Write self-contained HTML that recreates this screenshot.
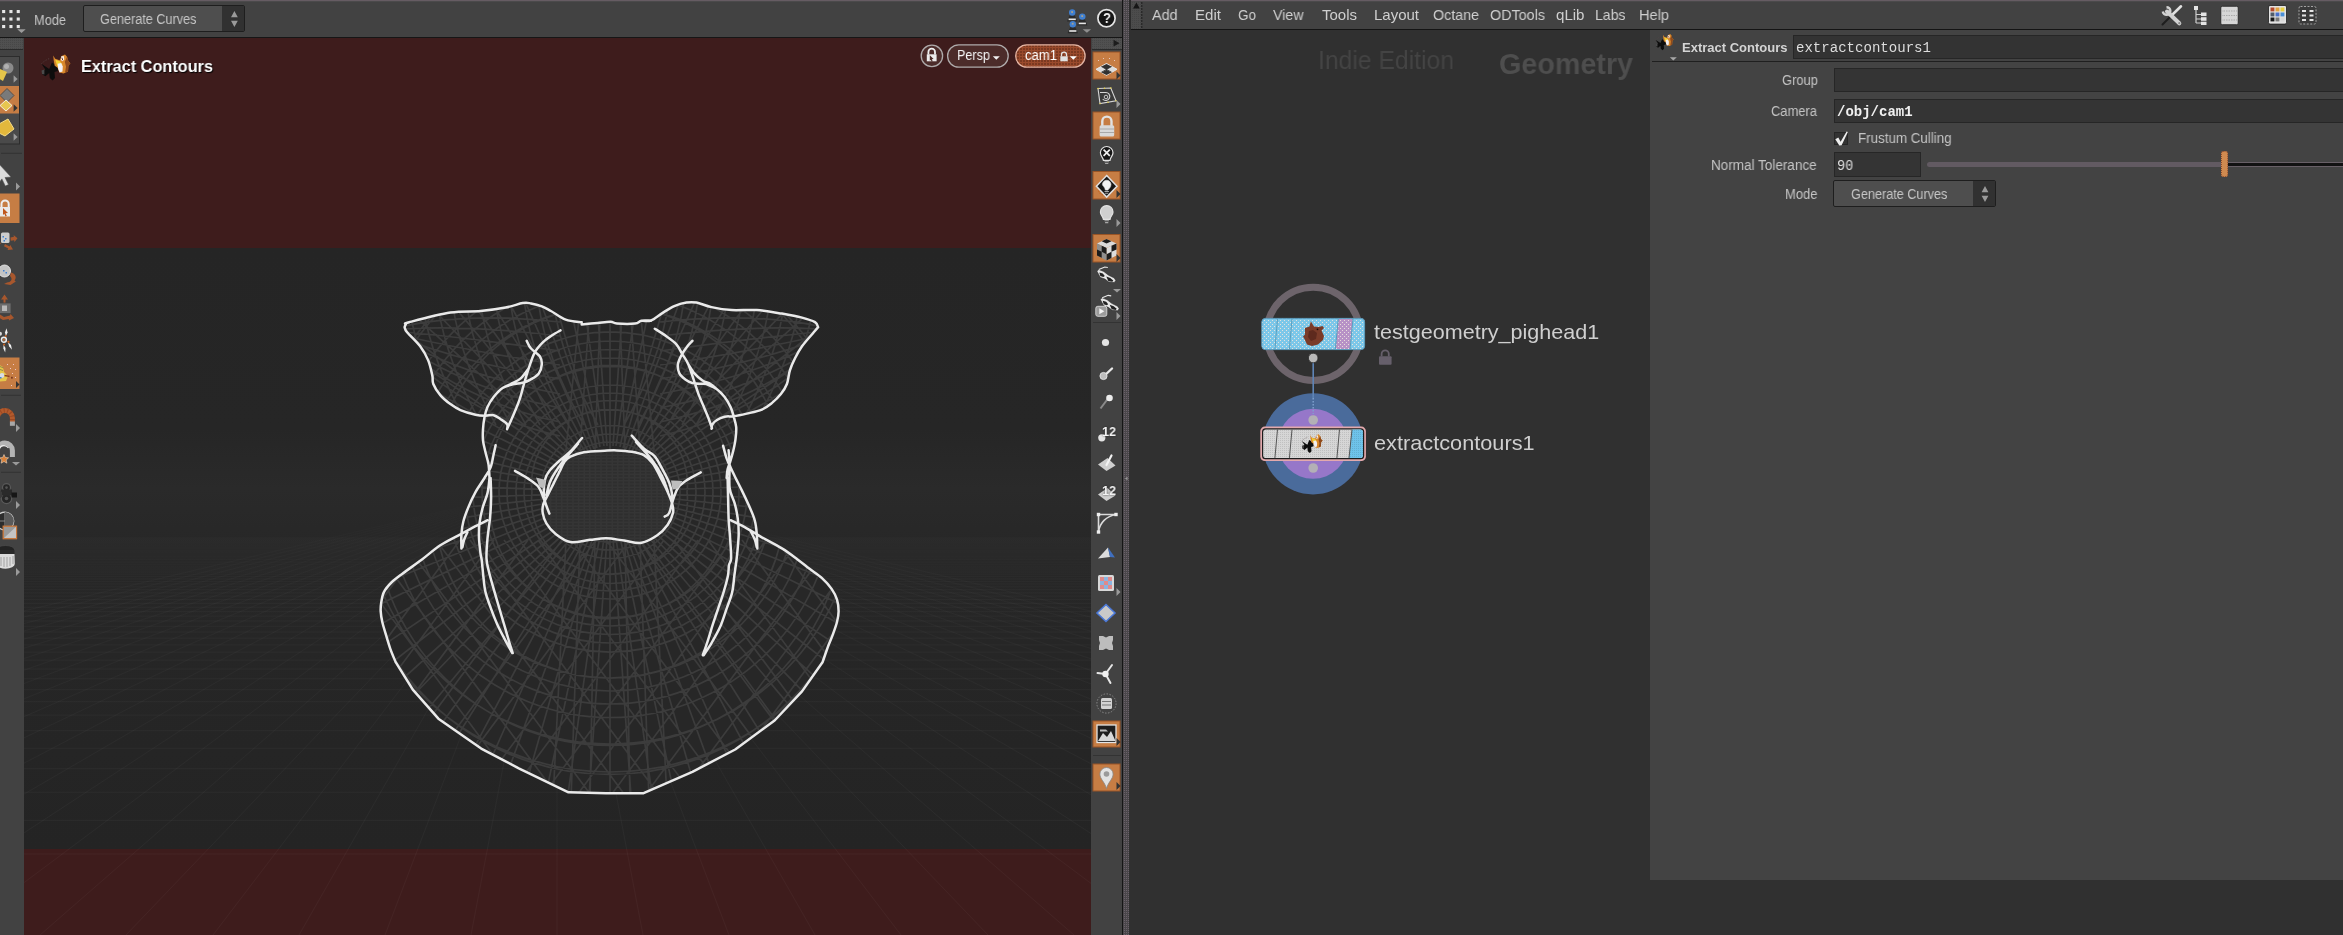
<!DOCTYPE html>
<html lang="en"><head><meta charset="utf-8"><title>Extract Contours</title><style>
html,body{margin:0;padding:0;background:#303030;}
body{width:2343px;height:935px;position:relative;overflow:hidden;font-family:"Liberation Sans",sans-serif;}
.b{position:absolute;box-sizing:border-box;}
.t{position:absolute;white-space:pre;transform-origin:0 50%;margin:0;padding:0;will-change:transform;}
svg{position:absolute;overflow:visible;}
</style></head><body>
<div class="b" style="left:0px;top:0px;width:2343px;height:2px;background:#4b4a4b;"></div>
<div class="b" style="left:0px;top:0px;width:2343px;height:1px;background:#665c63;"></div>
<div class="b" style="left:0px;top:2px;width:1122px;height:35px;background:#424242;"></div>
<div class="b" style="left:0px;top:37px;width:1122px;height:1px;background:#161616;"></div>
<div class="b" style="left:0px;top:38px;width:24px;height:897px;background:#424242;"></div>
<div class="b viewport" style="left:24px;top:38px;width:1067px;height:897px;background:#3e1c1c;"></div>
<div class="b" style="left:24px;top:248px;width:1067px;height:601px;background:linear-gradient(#252525,#262626 30%,#2a2a2a 40%,#272727 50%,#242424);"></div>
<svg width="2343" height="935" viewBox="0 0 2343 935" style="left:0;top:0"><defs><clipPath id="vp"><rect x="24" y="500" width="1067" height="435"/></clipPath><linearGradient id="gf" x1="0" y1="484" x2="0" y2="935" gradientUnits="userSpaceOnUse"><stop offset="0" stop-color="#fff" stop-opacity="0"/><stop offset=".25" stop-color="#fff" stop-opacity=".025"/><stop offset="1" stop-color="#fff" stop-opacity=".035"/></linearGradient></defs><path clip-path="url(#vp)" d="M24 854H1091M24 820.4H1091M24 792.3H1091M24 768.6H1091M24 748.3H1091M24 730.7H1091M24 715.2H1091M24 701.6H1091M24 689.6H1091M24 678.7H1091M24 669H1091M24 660.2H1091M24 652.2H1091M24 644.9H1091M24 638.2H1091M24 632H1091M24 626.3H1091M24 621H1091M24 616.1H1091M24 611.6H1091M24 607.3H1091M24 603.4H1091M24 599.6H1091M24 596.1H1091M24 592.8H1091M24 589.7H1091M24 586.8H1091M24 584H1091M24 581.4H1091M24 578.9H1091M24 576.5H1091M24 574.2H1091M24 572.1H1091M24 570H1091M24 568.1H1091M24 566.2H1091M24 564.4H1091M24 562.7H1091M24 561.1H1091M24 559.5H1091M24 558H1091M24 556.5H1091M24 555.2H1091M24 553.8H1091M24 552.5H1091M24 551.3H1091M24 550.1H1091M24 548.9H1091M24 547.8H1091M24 546.7H1091M24 545.7H1091M24 544.7H1091M24 543.7H1091M24 542.7H1091M24 541.8H1091M24 540.9H1091M24 540.1H1091M24 539.2H1091M24 538.4H1091M24 537.6H1091M557 484L-1337 935M557 484L-1251 935M557 484L-1165 935M557 484L-1079 935M557 484L-993 935M557 484L-907 935M557 484L-821 935M557 484L-734 935M557 484L-648 935M557 484L-562 935M557 484L-476 935M557 484L-390 935M557 484L-304 935M557 484L-218 935M557 484L-132 935M557 484L-46 935M557 484L40 935M557 484L126 935M557 484L213 935M557 484L299 935M557 484L385 935M557 484L471 935M557 484L557 935M557 484L643 935M557 484L729 935M557 484L815 935M557 484L901 935M557 484L988 935M557 484L1074 935M557 484L1160 935M557 484L1246 935M557 484L1332 935M557 484L1418 935M557 484L1504 935M557 484L1590 935M557 484L1676 935M557 484L1762 935M557 484L1848 935M557 484L1935 935M557 484L2021 935M557 484L2107 935M557 484L2193 935M557 484L2279 935M557 484L2365 935M557 484L2451 935" fill="none" stroke="url(#gf)" stroke-width="1"/></svg>
<div class="b" style="left:1091px;top:38px;width:31px;height:897px;background:#424242;"></div>
<div class="b" style="left:1122px;top:0px;width:1.3px;height:935px;background:#151515;"></div>
<div class="b" style="left:1123.3px;top:0px;width:5.7px;height:935px;background:#4a474a;"></div>
<div class="b" style="left:1131px;top:2px;width:1212px;height:27px;background:#424242;"></div>
<div class="b" style="left:1131px;top:29px;width:1212px;height:1px;background:#141414;"></div>
<div class="b" style="left:1129px;top:0px;width:2px;height:30px;background:#2c2c2c;"></div>
<div class="b" style="left:1129px;top:30px;width:1214px;height:905px;background:#303030;"></div>
<div class="b" style="left:1650px;top:30px;width:693px;height:850px;background:#434343;"></div>
<span class="t" style="left:34px;top:11.83px;font:14px/normal 'Liberation Sans',sans-serif;color:#c6c6c6;transform:scaleX(0.9137);">Mode</span>
<div class="b" style="left:83px;top:5px;width:162px;height:27px;background:#4e4e4e;border:1px solid #1e1e1e;border-radius:2px;"></div>
<div class="b" style="left:222px;top:6px;width:22px;height:25px;background:#313131;"></div>
<span class="t" style="left:99.5px;top:11.33px;font:14px/normal 'Liberation Sans',sans-serif;color:#c6c6c6;transform:scaleX(0.9052);">Generate Curves</span>
<span class="t" style="left:81px;top:56.62px;font:bold 17px/normal 'Liberation Sans',sans-serif;color:#fff;transform:scaleX(0.9571);text-shadow:1px 1px 1px #000;">Extract Contours</span>
<span class="t" style="left:1152px;top:6.42px;font:15px/normal 'Liberation Sans',sans-serif;color:#cfcfcf;transform:scaleX(0.9629);">Add</span>
<span class="t" style="left:1195px;top:6.42px;font:15px/normal 'Liberation Sans',sans-serif;color:#cfcfcf;transform:scaleX(1.0059);">Edit</span>
<span class="t" style="left:1238px;top:6.42px;font:15px/normal 'Liberation Sans',sans-serif;color:#cfcfcf;transform:scaleX(0.8996);">Go</span>
<span class="t" style="left:1273px;top:6.42px;font:15px/normal 'Liberation Sans',sans-serif;color:#cfcfcf;transform:scaleX(0.946);">View</span>
<span class="t" style="left:1322px;top:6.42px;font:15px/normal 'Liberation Sans',sans-serif;color:#cfcfcf;transform:scaleX(0.9881);">Tools</span>
<span class="t" style="left:1374px;top:6.42px;font:15px/normal 'Liberation Sans',sans-serif;color:#cfcfcf;transform:scaleX(0.9992);">Layout</span>
<span class="t" style="left:1433px;top:6.42px;font:15px/normal 'Liberation Sans',sans-serif;color:#cfcfcf;transform:scaleX(0.9512);">Octane</span>
<span class="t" style="left:1490px;top:6.42px;font:15px/normal 'Liberation Sans',sans-serif;color:#cfcfcf;transform:scaleX(0.9562);">ODTools</span>
<span class="t" style="left:1556px;top:6.42px;font:15px/normal 'Liberation Sans',sans-serif;color:#cfcfcf;transform:scaleX(1.005);">qLib</span>
<span class="t" style="left:1595px;top:6.42px;font:15px/normal 'Liberation Sans',sans-serif;color:#cfcfcf;transform:scaleX(0.9377);">Labs</span>
<span class="t" style="left:1639px;top:6.42px;font:15px/normal 'Liberation Sans',sans-serif;color:#cfcfcf;transform:scaleX(0.9725);">Help</span>
<span class="t" style="left:1317.6px;top:46.17px;font:25px/normal 'Liberation Sans',sans-serif;color:#444;transform:scaleX(0.9884);">Indie Edition</span>
<span class="t" style="left:1498.5px;top:48.16px;font:bold 29px/normal 'Liberation Sans',sans-serif;color:#4e4e4e;transform:scaleX(0.9898);">Geometry</span>
<span class="t" style="left:1682.4px;top:40.03px;font:bold 13px/normal 'Liberation Sans',sans-serif;color:#d4d4d4;transform:scaleX(0.9975);">Extract Contours</span>
<div class="b" style="left:1793px;top:35px;width:560px;height:24px;background:#333;border:1px solid #262626;"></div>
<span class="t" style="left:1796px;top:39.94px;font:14px/normal 'Liberation Mono',monospace;color:#ddd;transform:scaleX(1.0043);">extractcontours1</span>
<div class="b" style="left:1652px;top:61px;width:700px;height:1px;background:#1f1f1f;"></div>
<span class="t" style="left:1781.5px;top:71.93px;font:14px/normal 'Liberation Sans',sans-serif;color:#c4c4c4;transform:scaleX(0.9252);">Group</span>
<div class="b" style="left:1834px;top:68px;width:520px;height:24px;background:#343434;border:1px solid #262626;"></div>
<span class="t" style="left:1771px;top:103.33px;font:14px/normal 'Liberation Sans',sans-serif;color:#c4c4c4;transform:scaleX(0.9238);">Camera</span>
<div class="b" style="left:1834px;top:99px;width:520px;height:24px;background:#343434;border:1px solid #262626;"></div>
<span class="t" style="left:1837.4px;top:103.64px;font:bold 14px/normal 'Liberation Mono',monospace;color:#f0f0f0;transform:scaleX(0.9998);">/obj/cam1</span>
<div class="b" style="left:1834px;top:132px;width:14px;height:13px;background:#333;border:1px solid #262626;"></div>
<span class="t" style="left:1858.4px;top:129.83px;font:14px/normal 'Liberation Sans',sans-serif;color:#c4c4c4;transform:scaleX(0.9548);">Frustum Culling</span>
<span class="t" style="left:1711.4px;top:156.83px;font:14px/normal 'Liberation Sans',sans-serif;color:#c4c4c4;transform:scaleX(0.9648);">Normal Tolerance</span>
<div class="b" style="left:1834px;top:152px;width:87px;height:25px;background:#343434;border:1px solid #262626;"></div>
<span class="t" style="left:1837.4px;top:158.34px;font:14px/normal 'Liberation Mono',monospace;color:#ddd;transform:scaleX(0.9641);">90</span>
<div class="b" style="left:1927px;top:162px;width:297px;height:5.4px;background:#625a62;border-radius:3px 0 0 3px;"></div>
<div class="b" style="left:2224px;top:162px;width:130px;height:5.4px;background:#686067;"></div>
<div class="b" style="left:2224px;top:163.2px;width:130px;height:3px;background:#121212;"></div>
<div class="b" style="left:2220.5px;top:151px;width:7.8px;height:26.4px;background:#cf8a50;border-radius:2.5px;border:1px dotted #8a4a2c;"></div>
<span class="t" style="left:1784.6px;top:185.93px;font:14px/normal 'Liberation Sans',sans-serif;color:#c4c4c4;transform:scaleX(0.9252);">Mode</span>
<div class="b" style="left:1833px;top:180px;width:163px;height:27px;background:#4e4e4e;border:1px solid #1e1e1e;border-radius:2px;"></div>
<div class="b" style="left:1973px;top:181px;width:22px;height:25px;background:#313131;"></div>
<span class="t" style="left:1850.6px;top:185.83px;font:14px/normal 'Liberation Sans',sans-serif;color:#c6c6c6;transform:scaleX(0.9043);">Generate Curves</span>
<svg class="pig" width="2343" height="935" viewBox="0 0 2343 935" style="left:0;top:0"><defs><clipPath id="sil"><path d="M404.6 327.2L406 324L409.1 322.2L450.4 312.6L480.5 311.1L505.6 307.6L522.7 303.1L531 303.4L541.9 306.3L550.9 311L565.7 319.7L581.7 322.3L597.7 322.9L610.6 321.7L617 323.6L635 323.6L641.4 320.7L651 320.5L662.3 313.1L674.3 306.1L686.4 302.6L696.5 302.6L711.5 307.1L731.6 310.1L756.8 310.1L781.9 313.6L802 317.6L815 322.2L818.1 327.2L813 333.2L802 346.3L795 358.3L789.9 370.4L786.9 384L780.9 394.1L771.8 403.1L761.8 409.6L746.7 413.6L733.6 416.2L733.6 416.2L736.2 427.2L735.6 438.3L733.6 449.3L730.6 460.4L727.6 469.4L726.6 478L735.6 478L741.7 490.1L748.7 505.1L754.7 520.2L756.8 534.3L761.8 537.3L781.9 548.4L797.2 559.2L809.2 568.6L822 578.2L831.6 588.9L837 599.6L838.6 611.3L837 622L832.7 634.9L828.4 645.5L822.5 662.3L802 691.4L774.6 720.5L735.2 749.5L692.4 771.8L643.6 793.2L606.1 793.3L568.5 792.3L518.8 768.3L481.2 748.6L438.4 718.7L412.8 689.6L395.7 662.2L390.3 648.8L386 634.9L382.3 622L380.7 611.3L381.2 602.8L383.9 592.1L391.4 582.5L402.1 573.9L421.3 560L440.3 545.3L460.4 534.3L461.4 534.3L463.4 521.2L468.4 507.1L475.5 492.1L484.5 478L488.5 464.4L485.5 452.3L483 440.3L483 429.2L485.5 415.7L475.5 414.7L460.4 410.1L450.4 404.1L440.3 395.1L433.3 384L432.3 375.4L428.2 360.4L420.2 346.3L407.1 332.2L404.6 327.2Z"/></clipPath><clipPath id="snc"><path d="M604.8 450.7C599.3 451 589.6 451.2 583.9 452.2C578.2 453.2 573.6 455.1 570.4 456.7C567.1 458.3 566.1 459.5 564.4 461.9C562.6 464.3 561.6 467.4 559.9 470.9C558.1 474.4 555.9 478.9 553.9 482.9C551.9 486.9 549.6 491.4 547.9 494.9C546.1 498.4 544.3 500.9 543.4 503.9C542.5 506.9 542.2 509.7 542.7 512.9C543.2 516.1 544.3 519.8 546.4 523.3C548.5 526.8 551.4 530.7 555.4 533.8C559.4 536.9 564.6 541.1 570.4 542.1C576.1 543.1 583.9 540.4 589.9 539.8C595.9 539.2 600.6 538.2 606.3 538.3C612 538.4 618.4 539.9 624.3 540.6C630.2 541.4 636 543.7 641.5 542.8C647 541.9 652.9 538.3 657.3 535.3C661.7 532.3 665.1 528.5 667.7 524.8C670.3 521.1 672.2 516.4 673 512.9C673.8 509.4 673.1 507.4 672.2 503.9C671.3 500.4 669.7 496.4 667.7 491.9C665.7 487.4 662.7 481.6 660.2 476.9C657.7 472.1 655.5 467 652.8 463.4C650.1 459.8 647.3 457.1 643.8 455.2C640.3 453.3 636.3 452.6 631.8 451.8C627.3 451 621.3 450.6 616.8 450.4C612.3 450.2 610.3 450.4 604.8 450.7Z"/></clipPath></defs><path d="M404.6 327.2L406 324L409.1 322.2L450.4 312.6L480.5 311.1L505.6 307.6L522.7 303.1L531 303.4L541.9 306.3L550.9 311L565.7 319.7L581.7 322.3L597.7 322.9L610.6 321.7L617 323.6L635 323.6L641.4 320.7L651 320.5L662.3 313.1L674.3 306.1L686.4 302.6L696.5 302.6L711.5 307.1L731.6 310.1L756.8 310.1L781.9 313.6L802 317.6L815 322.2L818.1 327.2L813 333.2L802 346.3L795 358.3L789.9 370.4L786.9 384L780.9 394.1L771.8 403.1L761.8 409.6L746.7 413.6L733.6 416.2L733.6 416.2L736.2 427.2L735.6 438.3L733.6 449.3L730.6 460.4L727.6 469.4L726.6 478L735.6 478L741.7 490.1L748.7 505.1L754.7 520.2L756.8 534.3L761.8 537.3L781.9 548.4L797.2 559.2L809.2 568.6L822 578.2L831.6 588.9L837 599.6L838.6 611.3L837 622L832.7 634.9L828.4 645.5L822.5 662.3L802 691.4L774.6 720.5L735.2 749.5L692.4 771.8L643.6 793.2L606.1 793.3L568.5 792.3L518.8 768.3L481.2 748.6L438.4 718.7L412.8 689.6L395.7 662.2L390.3 648.8L386 634.9L382.3 622L380.7 611.3L381.2 602.8L383.9 592.1L391.4 582.5L402.1 573.9L421.3 560L440.3 545.3L460.4 534.3L461.4 534.3L463.4 521.2L468.4 507.1L475.5 492.1L484.5 478L488.5 464.4L485.5 452.3L483 440.3L483 429.2L485.5 415.7L475.5 414.7L460.4 410.1L450.4 404.1L440.3 395.1L433.3 384L432.3 375.4L428.2 360.4L420.2 346.3L407.1 332.2L404.6 327.2Z" fill="#272727"/><g clip-path="url(#sil)" fill="none" stroke="#3c3c3c" stroke-width="1.7"><path d="M557 492a53 50 0 1 0 106 0a53 50 0 1 0 -106 0M549 492a61 58 0 1 0 122 0a61 58 0 1 0 -122 0M541 492a69 66 0 1 0 139 0a69 66 0 1 0 -139 0M532 492a78 74 0 1 0 155 0a78 74 0 1 0 -155 0M524 492a86 82 0 1 0 172 0a86 82 0 1 0 -172 0M516 492a94 91 0 1 0 189 0a94 91 0 1 0 -189 0M507 492a103 99 0 1 0 206 0a103 99 0 1 0 -206 0M499 492a111 107 0 1 0 222 0a111 107 0 1 0 -222 0M490 492a120 116 0 1 0 239 0a120 116 0 1 0 -239 0M482 492a128 125 0 1 0 257 0a128 125 0 1 0 -257 0M473 492a137 134 0 1 0 274 0a137 134 0 1 0 -274 0M465 492a145 142 0 1 0 291 0a145 142 0 1 0 -291 0M456 492a154 151 0 1 0 308 0a154 151 0 1 0 -308 0M447 492a163 160 0 1 0 326 0a163 160 0 1 0 -326 0M435 492a175 173 0 1 0 349 0a175 173 0 1 0 -349 0M423 492a187 186 0 1 0 374 0a187 186 0 1 0 -374 0M411 492a199 199 0 1 0 398 0a199 199 0 1 0 -398 0M399 492a211 212 0 1 0 422 0a211 212 0 1 0 -422 0M387 492a223 225 0 1 0 447 0a223 225 0 1 0 -447 0M374 492a236 238 0 1 0 471 0a236 238 0 1 0 -471 0M362 492a248 252 0 1 0 496 0a248 252 0 1 0 -496 0M349 492a261 266 0 1 0 521 0a261 266 0 1 0 -521 0M337 492a273 280 0 1 0 546 0a273 280 0 1 0 -546 0M324 492a286 294 0 1 0 571 0a286 294 0 1 0 -571 0M312 492a298 308 0 1 0 597 0a298 308 0 1 0 -597 0M299 492a311 323 0 1 0 622 0a311 323 0 1 0 -622 0M286 492a324 337 0 1 0 648 0a324 337 0 1 0 -648 0M273 492a337 352 0 1 0 673 0a337 352 0 1 0 -673 0M260 492a350 367 0 1 0 699 0a350 367 0 1 0 -699 0M247 492a363 382 0 1 0 725 0a363 382 0 1 0 -725 0M234 492a376 397 0 1 0 751 0a376 397 0 1 0 -751 0M221 492a389 413 0 1 0 778 0a389 413 0 1 0 -778 0M656 494L1030 507M656 497L1028 536M655 500L1024 565M655 503L1018 594M654 506L1009 622M653 509L999 649M651 512L987 676M650 515L974 702M648 518L958 727M646 520L941 751M644 523L922 773M642 525L902 794M640 527L880 814M637 529L857 832M634 531L833 848M632 533L807 863M629 534L781 876M626 535L754 887M623 536L726 896M620 537L697 903M616 538L668 908M613 538L639 911M610 538L610 912M607 538L581 911M604 538L552 908M600 537L523 903M597 536L494 896M594 535L466 887M591 534L439 876M588 533L413 863M586 531L387 848M583 529L363 832M580 527L340 814M578 525L318 794M576 523L298 773M574 520L279 751M572 518L262 727M570 515L246 702M569 512L233 676M567 509L221 649M566 506L211 622M565 503L202 594M565 500L196 565M564 497L192 536M564 494L190 507M564 490L190 477M564 487L192 448M565 484L196 419M565 481L202 390M566 478L211 362M567 475L221 335M569 472L233 308M570 469L246 282M572 466L262 257M574 464L279 233M576 461L298 211M578 459L318 190M580 457L340 170M583 455L363 152M586 453L387 136M588 451L413 121M591 450L439 108M594 449L466 97M597 448L494 88M600 447L523 81M604 446L552 76M607 446L581 73M610 446L610 72M613 446L639 73M616 446L668 76M620 447L697 81M623 448L726 88M626 449L754 97M629 450L781 108M632 451L807 121M634 453L833 136M637 455L857 152M640 457L880 170M642 459L902 190M644 461L922 211M646 464L941 233M648 466L958 257M650 469L974 282M651 472L987 308M653 475L999 335M654 478L1009 362M655 481L1018 390M655 484L1024 419M656 487L1028 448M656 490L1030 477M579 318L566 450M566 540L553 800M589 318L580 450M580 540L571 800M600 318L595 450M595 540L590 800M610 318L610 450M610 540L610 800M620 318L625 450M625 540L630 800M631 318L640 450M640 540L649 800M641 318L654 450M654 540L667 800M96 540L296 810M426 540L226 810M130 540L330 810M460 540L260 810M164 540L364 810M494 540L294 810M198 540L398 810M528 540L328 810M232 540L432 810M562 540L362 810M266 540L466 810M596 540L396 810M300 540L500 810M630 540L430 810M334 540L534 810M664 540L464 810M368 540L568 810M698 540L498 810M402 540L602 810M732 540L532 810M436 540L636 810M766 540L566 810M470 540L670 810M800 540L600 810M504 540L704 810M834 540L634 810M538 540L738 810M868 540L668 810M572 540L772 810M902 540L702 810M606 540L806 810M936 540L736 810M640 540L840 810M970 540L770 810M674 540L874 810M1004 540L804 810M708 540L908 810M1038 540L838 810M742 540L942 810M1072 540L872 810M776 540L976 810M1106 540L906 810M810 540L1010 810M1140 540L940 810M844 540L1044 810M1174 540L974 810M878 540L1078 810M1208 540L1008 810M912 540L1112 810M1242 540L1042 810M946 540L1146 810M1276 540L1076 810M980 540L1180 810M1310 540L1110 810M1014 540L1214 810M1344 540L1144 810M404 326Q470 312 560 322M818 326Q752 312 660 322M404 329Q470 325 560 336M818 329Q752 325 660 336M404 332Q470 338 560 351M818 332Q752 338 660 351M404 336Q470 351 560 365M818 336Q752 351 660 365M404 339Q470 364 560 379M818 339Q752 364 660 379M404 342Q470 377 560 394M818 342Q752 377 660 394M404 346Q470 390 560 408M818 346Q752 390 660 408M404 349Q470 403 560 422M818 349Q752 403 660 422M404 352Q470 416 560 436M818 352Q752 416 660 436M408 300Q416 360 453 425M814 300Q806 360 769 425M422 300Q430 360 468 425M800 300Q792 360 754 425M437 300Q445 360 482 425M785 300Q777 360 740 425M452 300Q460 360 496 425M770 300Q762 360 726 425M466 300Q474 360 511 425M756 300Q748 360 711 425M480 300Q488 360 526 425M742 300Q734 360 696 425M495 300Q503 360 540 425M727 300Q719 360 682 425M510 300Q518 360 554 425M712 300Q704 360 668 425M524 300Q532 360 569 425M698 300Q690 360 653 425M538 300Q546 360 584 425M684 300Q676 360 638 425M553 300Q561 360 598 425M669 300Q661 360 624 425"/></g><g clip-path="url(#snc)"><path d="M604.8 450.7C599.3 451 589.6 451.2 583.9 452.2C578.2 453.2 573.6 455.1 570.4 456.7C567.1 458.3 566.1 459.5 564.4 461.9C562.6 464.3 561.6 467.4 559.9 470.9C558.1 474.4 555.9 478.9 553.9 482.9C551.9 486.9 549.6 491.4 547.9 494.9C546.1 498.4 544.3 500.9 543.4 503.9C542.5 506.9 542.2 509.7 542.7 512.9C543.2 516.1 544.3 519.8 546.4 523.3C548.5 526.8 551.4 530.7 555.4 533.8C559.4 536.9 564.6 541.1 570.4 542.1C576.1 543.1 583.9 540.4 589.9 539.8C595.9 539.2 600.6 538.2 606.3 538.3C612 538.4 618.4 539.9 624.3 540.6C630.2 541.4 636 543.7 641.5 542.8C647 541.9 652.9 538.3 657.3 535.3C661.7 532.3 665.1 528.5 667.7 524.8C670.3 521.1 672.2 516.4 673 512.9C673.8 509.4 673.1 507.4 672.2 503.9C671.3 500.4 669.7 496.4 667.7 491.9C665.7 487.4 662.7 481.6 660.2 476.9C657.7 472.1 655.5 467 652.8 463.4C650.1 459.8 647.3 457.1 643.8 455.2C640.3 453.3 636.3 452.6 631.8 451.8C627.3 451 621.3 450.6 616.8 450.4C612.3 450.2 610.3 450.4 604.8 450.7Z" fill="#2e2e2e"/><path d="M540 452H680M540 455.2H680M540 458.4H680M540 461.6H680M540 464.8H680M540 468H680M540 471.2H680M540 474.4H680M540 477.6H680M540 480.8H680M540 484H680M540 487.2H680M540 490.4H680M540 493.6H680M540 496.8H680M540 500H680M540 503.2H680M540 506.4H680M540 509.6H680M540 512.8H680M540 516H680M540 519.2H680M540 522.4H680M540 525.6H680M540 528.8H680M540 532H680M540 535.2H680M540 538.4H680M540 541.6H680M540 544.8H680M545 445V548M550.6 445V548M556.2 445V548M561.8 445V548M567.4 445V548M573 445V548M578.6 445V548M584.2 445V548M589.8 445V548M595.4 445V548M601 445V548M606.6 445V548M612.2 445V548M617.8 445V548M623.4 445V548M629 445V548M634.6 445V548M640.2 445V548M645.8 445V548M651.4 445V548M657 445V548M662.6 445V548M668.2 445V548M673.8 445V548" fill="none" stroke="#353535" stroke-width="1.6"/></g><path d="M404.6 327.2C404.8 326.7 405.2 324.8 406 324C406.8 323.2 401.7 324.1 409.1 322.2C416.5 320.3 438.5 314.5 450.4 312.6C462.3 310.8 471.3 311.9 480.5 311.1C489.7 310.3 498.6 308.9 505.6 307.6C512.6 306.3 518.5 303.8 522.7 303.1C526.9 302.4 527.8 302.9 531 303.4C534.2 303.9 538.6 305 541.9 306.3C545.2 307.6 546.9 308.8 550.9 311C554.9 313.2 560.6 317.8 565.7 319.7C570.8 321.6 579 321.9 581.7 322.3M581.7 324.6C584.4 324.3 592.9 323.4 597.7 322.9C602.5 322.4 607.4 321.6 610.6 321.7C613.8 321.8 612.9 323.3 617 323.6C621.1 323.9 630.9 324.1 635 323.6C639.1 323.1 638.7 321.2 641.4 320.7C644.1 320.2 649.4 320.7 651 320.7M641.4 320.7C643 320.7 647.5 321.8 651 320.5C654.5 319.2 658.4 315.5 662.3 313.1C666.2 310.7 670.3 307.9 674.3 306.1C678.3 304.4 682.7 303.2 686.4 302.6C690.1 302 692.3 301.9 696.5 302.6C700.7 303.4 705.6 305.9 711.5 307.1C717.4 308.4 724.1 309.6 731.6 310.1C739.1 310.6 748.4 309.5 756.8 310.1C765.2 310.7 774.4 312.4 781.9 313.6C789.4 314.9 796.5 316.2 802 317.6C807.5 319 812.3 320.6 815 322.2C817.7 323.8 817.6 326.4 818.1 327.2M818.1 327.2C817.2 328.2 815.7 330 813 333.2C810.3 336.4 805 342.1 802 346.3C799 350.5 797 354.3 795 358.3C793 362.3 791.2 366.1 789.9 370.4C788.5 374.7 788.4 380.1 786.9 384C785.4 387.9 783.4 390.9 780.9 394.1C778.4 397.3 775 400.5 771.8 403.1C768.6 405.7 766 407.9 761.8 409.6C757.6 411.4 751.4 412.5 746.7 413.6C742 414.7 737.3 415.7 733.6 416.2C729.9 416.7 727.4 416 724.6 416.7C721.8 417.4 718.6 418.9 716.6 420.2C714.6 421.4 713.4 422.8 712.5 424.2C711.6 425.6 711.7 427.9 711.5 428.7M404.6 327.2C405 328 404.5 329 407.1 332.2C409.7 335.4 416.7 341.6 420.2 346.3C423.7 351 426.2 355.5 428.2 360.4C430.2 365.2 431.4 371.5 432.3 375.4C433.2 379.3 432 380.7 433.3 384C434.6 387.3 437.5 391.8 440.3 395.1C443.1 398.5 447 401.6 450.4 404.1C453.8 406.6 456.2 408.3 460.4 410.1C464.6 411.9 471.3 413.8 475.5 414.7C479.7 415.6 482.5 415.6 485.5 415.7C488.5 415.8 491.1 414.6 493.6 415.2C496.1 415.8 498.4 417.7 500.6 419.2C502.9 420.7 506 422.5 507.1 424.2C508.2 425.9 507.1 428.4 507.1 429.2M513.7 384C511.9 384.7 506 385.8 502.6 388C499.2 390.2 496.1 393.9 493.6 397.1C491.1 400.3 489 403.8 487.5 407.1C486 410.5 485.2 413.5 484.5 417.2C483.8 420.9 483.2 425.3 483 429.2C482.8 433.1 482.6 436.4 483 440.3C483.4 444.2 484.6 448.3 485.5 452.3C486.4 456.3 487.8 460.1 488.5 464.4C489.2 468.7 489.3 475.7 489.5 478M706.5 384C708.2 384.8 713.6 386.8 716.6 389C719.6 391.2 722.3 394.1 724.6 397.1C726.9 400.1 729.1 403.9 730.6 407.1C732.1 410.3 732.7 412.9 733.6 416.2C734.5 419.5 735.9 423.5 736.2 427.2C736.5 430.9 736 434.6 735.6 438.3C735.2 442 734.4 445.6 733.6 449.3C732.8 453 731.6 457 730.6 460.4C729.6 463.8 728.3 466.5 727.6 469.4C726.9 472.3 726.8 476.6 726.6 478M560.5 330.4C558.9 331.3 554 334 551 336C548 338 545.5 339.6 542.8 342.3C540.1 345 537.1 348 534.8 352.3C532.4 356.6 530.6 362.9 528.7 368.4C526.9 373.8 525.2 379.9 523.7 385C522.2 390.1 521.4 394.2 519.7 399.1C518 404 515.8 409.3 513.7 414.2C511.6 419.1 508.4 426.2 507.3 428.6M528.7 368.4C527.4 370.1 523.7 375.8 520.7 378.4C517.7 381 513.7 382.4 510.7 384C507.7 385.6 504 387.3 502.6 388M526.7 340.8C527.4 342.1 528.6 345.7 530.8 348.3C533 350.9 538 353.6 539.8 356.3C541.6 359 542 361.5 541.8 364.4C541.6 367.2 540.6 370.9 538.8 373.4C537 375.9 533.3 377.9 530.8 379.4C528.3 380.9 526.6 381.7 523.7 382.5C520.9 383.3 515.4 383.8 513.7 384M654.8 328.7C656.7 329.9 662.7 333.6 666.3 336.2C669.9 338.8 673.7 341.3 676.4 344.3C679.1 347.3 680.4 351 682.4 354.3C684.4 357.6 686.2 359.3 688.4 364.4C690.6 369.5 693.7 380.1 695.4 385C697.1 389.9 697.1 390.6 698.5 394.1C699.9 397.6 701.8 402.1 703.5 406.1C705.2 410.1 707.1 414.5 708.5 418.2C709.9 421.9 711.4 426.5 712 428.2M688.4 364.4C689.4 365.9 692 370.7 694.4 373.4C696.8 376.1 699.8 378.7 702.5 380.5C705.2 382.3 708.1 382.6 710.5 384C712.9 385.4 715.6 388.2 716.6 389M692.4 340.8C691.6 341.7 689.2 343.9 687.4 346.3C685.6 348.7 683 352.3 681.4 355.3C679.8 358.3 678.2 361.4 677.9 364.4C677.6 367.4 678.1 370.9 679.4 373.4C680.6 375.9 683.2 377.8 685.4 379.4C687.6 381 688.9 382.2 692.4 383C695.9 383.8 704.1 383.8 706.5 384M495.6 445.3C495.3 446.8 494.4 450.7 493.6 454.4C492.8 458.1 492.1 463.5 490.6 467.4C489.1 471.3 487 473.9 484.5 478C482 482.1 478.2 487.2 475.5 492.1C472.8 497 470.4 502.2 468.4 507.1C466.4 512 464.6 516.7 463.4 521.2C462.2 525.7 461.7 529.8 461.4 534.3C461.1 538.8 461.4 546 461.4 548.4M489.5 478C489.2 480.5 488.7 488.1 487.5 493.1C486.3 498.1 483.8 503.2 482.5 508.2C481.2 513.2 480.1 518.2 479.5 523.2C478.9 528.2 478.8 533.3 479 538.3C479.2 543.3 480.1 549.8 480.5 553.4C480.9 557 481.2 556.2 481.7 560C482.2 563.8 482.7 570.6 483.3 576C483.9 581.4 484.2 586.8 485.5 592.1C486.8 597.5 488.9 602.8 490.8 608.1C492.8 613.5 494.9 619 497.2 624.2C499.5 629.4 502.2 634.3 504.7 639.1C507.2 643.9 511 650.7 512.2 653M490.6 478C490.7 481.4 491.2 491.4 491.1 498.1C491 504.8 490.6 511.5 490 518.2C489.4 524.9 488.1 531.6 487.5 538.3C486.9 545 486.3 553 486.5 558.4C486.7 563.8 487.6 566 488.7 570.7C489.8 575.4 491.4 581 493 586.7C494.6 592.4 496.5 598.8 498.3 604.9C500.1 611 501.9 617 503.7 623.1C505.5 629.2 507.5 636.3 509 641.3C510.5 646.3 512.1 651 512.7 653M723.1 445.8C723.7 447.9 725.4 454.8 726.6 458.4C727.9 462 729.1 464.1 730.6 467.4C732.1 470.7 733.8 474.2 735.6 478C737.5 481.8 739.5 485.6 741.7 490.1C743.9 494.6 746.5 500.1 748.7 505.1C750.9 510.1 753.4 515.3 754.7 520.2C756.1 525.1 756.4 529.6 756.8 534.3C757.2 539 757.2 546 757.3 548.4M728.6 450.3C728.8 452.6 729.4 458.1 729.6 464.4C729.8 470.7 728.8 481.6 729.6 488C730.4 494.4 733.2 498.1 734.6 503.1C736 508.1 737 513.2 737.7 518.2C738.4 523.2 738.7 528.3 738.7 533.3C738.7 538.3 738.1 543.9 737.7 548.4C737.3 552.9 737.1 555.4 736.5 560C735.9 564.6 735 570.6 734.3 576C733.6 581.4 733.5 586.8 732.2 592.1C731 597.5 728.8 602.4 726.8 608.1C724.8 613.8 722.9 620.6 720.4 626.3C717.9 632 714.7 637.5 711.9 642.3C709.1 647.1 705.1 653.1 703.8 655.2M727.6 478C727.7 481.4 727.9 491.4 728.1 498.1C728.3 504.8 728.3 511.5 728.6 518.2C728.9 524.9 729.7 531.6 730.1 538.3C730.5 545 731.3 553.9 731.1 558.4C730.9 562.9 729.5 562.1 729 565C728.5 567.9 728.8 571.5 727.9 576C727 580.5 725.2 586.8 723.6 592.1C722 597.5 720.1 602.8 718.3 608.1C716.5 613.5 714.7 618.7 712.9 624.2C711.1 629.7 709.3 636.1 707.6 641.3C705.9 646.5 703.6 652.9 702.8 655.2M487.5 520.2C485.5 521.2 480 523.9 475.5 526.2C471 528.6 466.3 531.1 460.4 534.3C454.5 537.5 446.8 541 440.3 545.3C433.8 549.6 427.7 555.2 421.3 560C414.9 564.8 407.1 570.1 402.1 573.9C397.1 577.6 394.4 579.5 391.4 582.5C388.4 585.5 385.6 588.7 383.9 592.1C382.2 595.5 381.7 599.6 381.2 602.8C380.7 606 380.5 608.1 380.7 611.3C380.9 614.5 381.4 618.1 382.3 622C383.2 625.9 384.7 630.4 386 634.9C387.3 639.4 388.7 644.2 390.3 648.8C391.9 653.3 394.8 660 395.7 662.2M730.6 520.2C733.3 521.6 741.5 525.4 746.7 528.3C751.9 531.1 755.9 533.9 761.8 537.3C767.7 540.6 776 544.8 781.9 548.4C787.8 552 792.7 555.8 797.2 559.2C801.8 562.6 805.1 565.4 809.2 568.6C813.3 571.8 818.3 574.8 822 578.2C825.7 581.6 829.1 585.3 831.6 588.9C834.1 592.5 835.8 595.9 837 599.6C838.2 603.3 838.6 607.6 838.6 611.3C838.6 615 838 618.1 837 622C836 625.9 834.1 631 832.7 634.9C831.3 638.8 830.1 640.9 828.4 645.5C826.7 650.1 823.5 659.5 822.5 662.3M467.4 532.3C466.8 533.6 464.8 537.5 464 540C463.2 542.5 462.7 546.1 462.4 547.3M750.7 531.3C751.4 532.8 754 537.3 755 540C756 542.7 756.5 546.1 756.8 547.3M582.1 438C580.1 440.2 574.1 447.8 570.4 451.5C566.7 455.2 563.4 457.2 559.9 460.4C556.4 463.6 551.9 467.6 549.4 470.9C546.9 474.1 545.8 475.4 544.9 479.9C544 484.4 543.5 492.3 544.2 497.9C545 503.5 548.5 511 549.4 513.6M631.8 435.7C633.8 437.8 640 445.1 643.8 448.5C647.5 451.9 651.3 452.7 654.3 455.9C657.3 459.1 659.2 463.4 661.7 467.9C664.2 472.4 667.5 477.9 669.2 482.9C671 487.9 672.2 492.9 672.2 497.9C672.2 502.9 670.5 509.8 669.2 512.9C668 516 665.5 516 664.7 516.6M515 470.9C517.5 472.4 526 477.1 530 479.9C534 482.6 536.7 484.4 538.9 487.4C541.1 490.4 541.9 494.1 543.4 497.9C544.9 501.6 547.1 507.9 547.9 509.9M700.7 472.4C698.5 473.6 691 477.4 687.2 479.9C683.5 482.4 680.5 484.4 678.2 487.4C676 490.4 675 494.4 673.7 497.9C672.5 501.4 671.2 506.6 670.7 508.4M577.9 444C575.1 447.2 565.9 457.4 561.4 463.4C556.9 469.4 553.4 474.6 550.9 479.9C548.4 485.1 547.1 492.4 546.4 494.9M636 442C638.7 445 647.7 454.3 652 460C656.3 465.7 659.3 470.7 662 476C664.7 481.3 667 489.3 668 492M395.7 662.2L412.8 689.6L438.4 718.7L481.2 748.6L518.8 768.3L568.5 792.3L606.1 793.3L643.6 793.2L692.4 771.8L735.2 749.5L774.6 720.5L802 691.4L822.5 662.3M604.8 450.7C599.3 451 589.6 451.2 583.9 452.2C578.2 453.2 573.6 455.1 570.4 456.7C567.1 458.3 566.1 459.5 564.4 461.9C562.6 464.3 561.6 467.4 559.9 470.9C558.1 474.4 555.9 478.9 553.9 482.9C551.9 486.9 549.6 491.4 547.9 494.9C546.1 498.4 544.3 500.9 543.4 503.9C542.5 506.9 542.2 509.7 542.7 512.9C543.2 516.1 544.3 519.8 546.4 523.3C548.5 526.8 551.4 530.7 555.4 533.8C559.4 536.9 564.6 541.1 570.4 542.1C576.1 543.1 583.9 540.4 589.9 539.8C595.9 539.2 600.6 538.2 606.3 538.3C612 538.4 618.4 539.9 624.3 540.6C630.2 541.4 636 543.7 641.5 542.8C647 541.9 652.9 538.3 657.3 535.3C661.7 532.3 665.1 528.5 667.7 524.8C670.3 521.1 672.2 516.4 673 512.9C673.8 509.4 673.1 507.4 672.2 503.9C671.3 500.4 669.7 496.4 667.7 491.9C665.7 487.4 662.7 481.6 660.2 476.9C657.7 472.1 655.5 467 652.8 463.4C650.1 459.8 647.3 457.1 643.8 455.2C640.3 453.3 636.3 452.6 631.8 451.8C627.3 451 621.3 450.6 616.8 450.4C612.3 450.2 610.3 450.4 604.8 450.7Z" fill="none" stroke="#eaeaea" stroke-width="2.5" stroke-linejoin="round" stroke-linecap="round"/><path d="M536 477.5l10 2.5-2 8.5-4.5-1.5zM671 480.5l11.5.500-4.5 7.5-5.5 1z" fill="#bdbdbd"/></svg>
<svg width="2343" height="935" viewBox="0 0 2343 935" style="left:0;top:0"><defs><pattern id="hdots" width="2" height="2" patternUnits="userSpaceOnUse"><rect width="1" height="1" fill="#2d2d2d" opacity=".28"/></pattern><pattern id="sdots" width="2" height="2" patternUnits="userSpaceOnUse"><rect x="0" y="0" width="1" height="1" fill="#6b616a"/></pattern><pattern id="cdots" width="3" height="3" patternUnits="userSpaceOnUse"><circle cx="1" cy="1" r=".8" fill="#3a1408" opacity=".75"/></pattern></defs><rect x="2.1" y="10" width="3.1" height="3.1" fill="#e8e8e8"/><rect x="9.4" y="10" width="3.1" height="3.1" fill="#e8e8e8"/><rect x="16.7" y="10" width="3.1" height="3.1" fill="#e8e8e8"/><rect x="2.1" y="17.5" width="3.1" height="3.1" fill="#e8e8e8"/><rect x="9.4" y="17.5" width="3.1" height="3.1" fill="#e8e8e8"/><rect x="16.7" y="17.5" width="3.1" height="3.1" fill="#e8e8e8"/><rect x="2.1" y="25" width="3.1" height="3.1" fill="#e8e8e8"/><rect x="9.4" y="25" width="3.1" height="3.1" fill="#e8e8e8"/><rect x="16.7" y="25" width="3.1" height="3.1" fill="#e8e8e8"/><path d="M17.3 29.3h8.4l-4.2 3.6z" fill="#9b9b9b"/><path d="M231 17.3h6.8l-3.4-6.4zM231 20.7h6.8l-3.4 6.4z" fill="#9a9a9a"/><path d="M1981.6 192.3h6.8l-3.4-6.4zM1981.6 195.7h6.8l-3.4 6.4z" fill="#9a9a9a"/><path d="M1067 21.5l2.6-6h5.2l2.6 6z" fill="#2a2a2a"/><rect x="1068.6000000000001" y="18.5" width="7.2" height="1.6" fill="#e6e6e6"/><circle cx="1072.2" cy="12.5" r="3.2" fill="#3f7fd0"/><rect x="1071.2" y="11.1" width="1.8" height="1.8" fill="#a9a08a"/><path d="M1077.1 25.6l2.6-6h5.2l2.6 6z" fill="#2a2a2a"/><rect x="1078.7" y="22.6" width="7.2" height="1.6" fill="#e6e6e6"/><circle cx="1082.3" cy="16.6" r="3.2" fill="#3f7fd0"/><rect x="1081.3" y="15.200000000000001" width="1.8" height="1.8" fill="#a9a08a"/><path d="M1067.6 33.2l2.6-6h5.2l2.6 6z" fill="#2a2a2a"/><rect x="1069.2" y="30.2" width="7.2" height="1.6" fill="#e6e6e6"/><circle cx="1072.8" cy="24.2" r="3.2" fill="#3f7fd0"/><rect x="1071.8" y="22.8" width="1.8" height="1.8" fill="#a9a08a"/><path d="M1082.7 29.2h8.4l-4.2 3.6z" fill="#8e8e8e"/><circle cx="1106.5" cy="18.3" r="8.6" fill="#161616" stroke="#e4e4e4" stroke-width="1.7"/><rect x="0" y="38" width="23" height="11" fill="#505050"/><rect x="0" y="38" width="23" height="11" fill="url(#hdots)"/><path d="M0 49.5h23" stroke="#2b2b2b"/><rect x="-1" y="56.5" width="20.5" height="87.5" fill="#4a4a4a" stroke="#2c2c2c"/><rect x="0" y="86" width="19" height="27.5" fill="#c67d44"/><circle cx="8" cy="68" r="5.5" fill="#8a8a8a"/><circle cx="6.5" cy="66.5" r="2.5" fill="#b0b0b0"/><path d="M-2 68l9 4-4 9-5-3z" fill="#e6c64a"/><path d="M7 88.5l7 7-7 7-7-7z" fill="#7a7a7a" stroke="#444" stroke-width=".8"/><path d="M6 100l6 5.5-6 5.5-6-5.5z" fill="#e7c650" stroke="#fff" stroke-width=".8"/><path d="M-1 124l9-5 6 10-9 7-6-3z" fill="#e3b83c" stroke="#f4dc88" stroke-width="1"/><path d="M13.6 75.2v7.6l4-3.8z" fill="#9a9a9a"/><path d="M13.6 104.2v7.6l4-3.8z" fill="#333"/><path d="M13.6 133.2v7.6l4-3.8z" fill="#9a9a9a"/><path d="M1 153.3h21" stroke="#333"/><path d="M-1 164l12 13-6 .5 3.5 7-3.2 1.6-3.4-7.2-3 4z" fill="#dcdcdc" stroke="#555" stroke-width=".6"/><path d="M16 182.5v8l4-4z" fill="#9a9a9a"/><rect x="0" y="193.5" width="19.5" height="29.5" fill="#c67d44"/><path d="M1.5 208v-4a3.6 3.6 0 0 1 7.2 0v4" fill="none" stroke="#eee" stroke-width="2"/><rect x="-1" y="207" width="11" height="9.5" fill="#e9e9e9"/><path d="M3 208l5 5-2.4.2 1.2 2.6-1.3.6-1.2-2.7-1.3 1.4z" fill="#c0561c"/><rect x="1" y="232.5" width="8.5" height="10.5" rx="1.5" fill="#cdcdcd"/><path d="M2.5 236h1.5v1.5h-1.5zM5 238h1.5v1.5h-1.5zM3.5 240h1.5v1.5h-1.5z" fill="#3f7fd0"/><path d="M10.5 237.5l3.5-.800-.500-1.7 4 3.3-3 3.7-.300-1.7-3.5.5zM5 244l4.5 2.5.8-1.5 2.7 4.5-5.5.5.8-1.5-4.3-2.2zM-1 241l2 2.5-2 1z" fill="#a8572d"/><circle cx="4.5" cy="271" r="6" fill="#c4c4c4" stroke="#ececec" stroke-width=".9"/><path d="M3 270h1.5v1.5h-1.5zM5.5 272h1.5v1.5h-1.5z" fill="#3f7fd0"/><path d="M11 272.5c4.5 1 6 5 3.5 8l1.3 1-5.3 3.5-6.5-1 3-1.5c3.5 0 6.5-3 3-6.5z" fill="#a8572d"/><path d="M1 299.5h7l-3.5-5zM3.5 299.5h2v4h-2z" fill="#a8572d"/><rect x="-1" y="303" width="12" height="10.5" fill="#6c6c6c" stroke="#444" stroke-width=".8"/><rect x="2" y="305.5" width="5" height="5.5" fill="#b9b9b9"/><path d="M-1 314l5 3 6-1.5.5-1.5 3.5 4-5 2.5-.300-1.5-5.7 1-4-2.5z" fill="#a8572d"/><circle cx="0" cy="333.7" r="2" fill="#d8d8d8"/><path d="M6.5 328.3l1.1 4.2-1.7 3.6-.900-3.6z" fill="#f0f0f0"/><circle cx="3.9" cy="339.7" r="2.5" fill="#6a6a6a" stroke="#ececec" stroke-width="1.4"/><circle cx="3.9" cy="339.7" r="1" fill="#d0621c"/><path d="M8 342.3l3 2.7 1 4.8-2.8-3.3z" fill="#f0f0f0"/><circle cx="8.4" cy="341.8" r="1.1" fill="#d0621c"/><path d="M3.5 344.8l2 3.2-.300 4.6-1.8-4.2z" fill="#f0f0f0"/><circle cx="4.1" cy="344.6" r="1" fill="#d0621c"/><circle cx="5.7" cy="336" r=".9" fill="#d0621c"/><rect x="0" y="357.5" width="19.5" height="31.5" fill="#c67d44"/><path d="M-1 364.5l4 2.5 1 5 4 4-2 5-7 .500z" fill="#e6c64a"/><path d="M0 366.5l3.5 1.5M0 369.5l3 1" stroke="#7a7a4a" stroke-width=".8"/><circle cx="2" cy="375.5" r="2.4" fill="#d8dde6"/><rect x="0" y="377" width="1.5" height="1.5" fill="#3f7fd0"/><path d="M4.5 375.5l5 .800" stroke="#8a3a1a" stroke-width="1.3"/><rect x="11" y="376.8" width="1.8" height="1.8" fill="#7a3a20"/><path d="M7 364.5h1M13 364.5h1M10 368.5h1M15 369.5h1M12 373.5h1M15 377.5h1M11 385.5h1" stroke="#f0c8c8" stroke-width="1"/><path d="M16 381v7l3.5-3.5z" fill="#333"/><path d="M1 395.3h20" stroke="#333"/><path d="M-2.6 418a7.5 7.5 0 0 1 15 0v4" fill="none" stroke="#b25a2c" stroke-width="5"/><path d="M-2.6 418a7.5 7.5 0 0 1 15 0v4" fill="none" stroke="#8a3c1c" stroke-width="5" stroke-dasharray="1 2.5" opacity=".6"/><rect x="9.9" y="421.5" width="5" height="4.3" fill="#a8a8a8"/><path d="M16 424v8l4-4z" fill="#9a9a9a"/><path d="M-2.6 450.5a7.5 7.5 0 0 1 15 0v6.5" fill="none" stroke="#b4b4b4" stroke-width="5"/><path d="M-.500 448a5.5 5.5 0 0 1 9 0" fill="none" stroke="#ececec" stroke-width="1.2"/><path d="M4 454.5l1.4 3 3.2.3-2.4 2.2.7 3.2-2.9-1.7-2.9 1.7.7-3.2-2.4-2.2 3.2-.300z" fill="#d9823a" stroke="#f4e4d4" stroke-width=".5"/><path d="M12 462h8l-4 3.6z" fill="#9a9a9a"/><path d="M1 472.3h20" stroke="#333"/><circle cx="6.5" cy="487.6" r="4" fill="#262626" stroke="#5a5a5a" stroke-width="1.2"/><circle cx="6.5" cy="487.6" r="1.3" fill="#555"/><circle cx="6.5" cy="498.5" r="5.2" fill="#262626" stroke="#5a5a5a" stroke-width="1.2"/><circle cx="6.5" cy="498.5" r="1.8" fill="#555"/><rect x="1" y="489.5" width="11" height="6" fill="#2a2a2a"/><path d="M11.5 492.5h5.5v5h-5.5z" fill="#161616"/><path d="M-1 490l3 2v5l-3 2z" fill="#3a3a3a"/><path d="M16 501v8l4-4z" fill="#9a9a9a"/><circle cx="4.9" cy="521" r="8.9" fill="#2c2c2c" stroke="#cfcfcf" stroke-width="1.2"/><path d="M4.9 512.1v17.8M-4 521h17.8" stroke="#9a9a9a" stroke-width=".8"/><path d="M4.9 512.1a8.9 8.9 0 0 1 0 17.8z" fill="#5a5a5a"/><rect x="3.2" y="526.2" width="13.3" height="12.5" fill="#9a9a9a" stroke="#c9783c" stroke-width="1.3"/><path d="M4 538l12-11.2v11.2z" fill="#c4c4c4"/><ellipse cx="5.5" cy="549.5" rx="9" ry="4" fill="#232323" stroke="#4a4a4a" stroke-width=".8"/><path d="M-3.5 550v4h18v-4" fill="#2a2a2a"/><path d="M-3.5 554h18l.300 10a9 4.5 0 0 1-18.6 0z" fill="#dcdcdc"/><path d="M-2 556v8M1 557v9M4 557v10M7 557v10M10 557v9M13 556v8" stroke="#8a8a8a" stroke-width=".7"/><path d="M16 568v8l4-4z" fill="#9a9a9a"/><rect x="1092" y="38" width="30" height="11" fill="#505050"/><rect x="1092" y="38" width="30" height="11" fill="url(#hdots)"/><path d="M1092 49.5h30" stroke="#2b2b2b"/><path d="M1113.5 39.8v6.8l6-3.4z" fill="#1c1c1c"/><rect x="1093" y="52" width="27" height="27" fill="#c67d44" stroke="#9a5526" stroke-width="1"/><rect x="1093" y="112" width="27" height="27" fill="#c67d44" stroke="#9a5526" stroke-width="1"/><rect x="1093" y="171.5" width="27" height="27.5" fill="#c67d44" stroke="#9a5526" stroke-width="1"/><rect x="1093" y="234.5" width="27" height="27.5" fill="#c67d44" stroke="#9a5526" stroke-width="1"/><rect x="1093" y="721" width="27" height="26" fill="#c67d44" stroke="#9a5526" stroke-width="1"/><rect x="1093" y="764" width="27" height="27" fill="#c67d44" stroke="#9a5526" stroke-width="1"/><path d="M1106.5 63.5l10.5 5.8-10.5 6-10.5-6z" fill="#dcdcdc" stroke="#e6e6e6" stroke-width="1"/><path d="M1106.5 63.9l4.9 2.7-4.9 2.8-4.9-2.8zM1106.5 69.7l4.9 2.7-4.9 2.6-4.9-2.6z" fill="#303030"/><path d="M1101.3 66.5l10.4 5.8M1111.7 66.5l-10.4 5.8" stroke="#2b2b2b" stroke-width=".8"/><path d="M1098 60.5h1M1103 58.5h1M1109 58.5h1M1114 60.5h1" stroke="#e8c8c0" stroke-width="1"/><path d="M1116.5 71.5v8l4-4z" fill="#333"/><path d="M1098 88.5l12.8-.500 5.2 12.8-16 2.8z" fill="#3a3a3a" stroke="#d6d6d6" stroke-width="1.1"/><path d="M1100 92.5h5.5a4 4 0 1 1-2.8 6.5" fill="none" stroke="#d6d6d6" stroke-width="1.1"/><circle cx="1106" cy="97" r="1.8" fill="none" stroke="#d6d6d6" stroke-width=".9"/><path d="M1098 88.5h.1M1104.5 88.3h.1M1110.8 88h.1M1116 100.8h.1M1108 102.3h.1M1100 103.6h.1" stroke="#e8d23c" stroke-width="1.4" stroke-linecap="round"/><path d="M1116.5 100v8l4-4z" fill="#9a9a9a"/><path d="M1102.3 126v-4.8a4.6 4.6 0 0 1 9.2 0v4.8" fill="none" stroke="#e2e2e2" stroke-width="2.4"/><rect x="1099.6" y="125.3" width="14.6" height="11.3" rx="1.5" fill="#d9d9d9"/><path d="M1100 129h14M1100 132.5h14" stroke="#a8a8a8" stroke-width="1"/><path d="M1100.4 152.8a6.3 6.3 0 1 1 12.6 0c0 3-2.6 4.4-3 7.5h-6.6c-.4-3-3-4.4-3-7.5z" fill="#151515" stroke="#e2e2e2" stroke-width="1.2"/><path d="M1104.5 161.7h4.4M1105.1 163.5h3.2" stroke="#a8a8a8" stroke-width="1.1"/><path d="M1103.6 149.7l6.2 6.2M1109.8 149.7l-6.2 6.2" stroke="#eee" stroke-width="1.7"/><path d="M1106.7 175.5l10.3 10.8-10.3 10.8-10.3-10.8z" fill="#161616" stroke="#e0e0e0" stroke-width="1.5"/><path d="M1102.4 184.6a4.3 4.3 0 1 1 8.6 0c0 3-2.6 4.4-3 5.5h-2.6c-.4-3-3-4.4-3-5.5z" fill="#f2f2f2" stroke="#e2e2e2" stroke-width="0.6"/><path d="M1104.5 191.5h4.4M1105.1 193.3h3.2" stroke="#a8a8a8" stroke-width="1.1"/><path d="M1098.5 190.5a6 6 0 0 0 5 4.5" fill="none" stroke="#c46a2c" stroke-width="1.2" stroke-dasharray="1.5 1"/><path d="M1116.5 190v8l4-4z" fill="#333"/><path d="M1100.4 211.9a6.3 6.3 0 1 1 12.6 0c0 3-2.6 4.4-3 7.5h-6.6c-.4-3-3-4.4-3-7.5z" fill="#cfcfcf" stroke="#e2e2e2" stroke-width="1.2"/><path d="M1104.5 220.8h4.4M1105.1 222.6h3.2" stroke="#a8a8a8" stroke-width="1.1"/><path d="M1116.5 219v8l4-4z" fill="#9a9a9a"/><path d="M1097 243.5l9.5-4.5 10 4.5-10 4.5z" fill="#d9d9d9"/><path d="M1097 243.5l9.5 4.5v12.5l-9.5-5z" fill="#8e8e8e"/><path d="M1106.5 248l10-4.5v12l-10 5z" fill="#dcdcdc"/><path d="M1101.7 241.3l4.8-2.3 5 2.3-5 2.2zM1097 249.5l4.7 2.3v6l-4.7-2.4zM1101.7 245.8l4.8 2.2v6.3l-4.8-2.5zM1106.5 254.3l5-2.5v6.2l-5 2.5zM1111.5 245.7l5-2.2v6l-5 2.3z" fill="#1c1c1c"/><path d="M1116.5 254v8l4-4z" fill="#333"/><g transform="translate(1096.8 269.5)"><path d="M0 1.5l2-1.5 5 2 4.5 3.5 6 3 1.5 2.5-1.5 2-5.5-.500-4-3-4.5-1.5z" fill="#e8e8e8" stroke="#2a2a2a" stroke-width=".6"/><path d="M2.5 3l3.5 1 2 2.5-1.5 1-3-1zM9.5 7l4 1.5 3 2.5-1 1.2-4-.700z" fill="#222"/><path d="M2 0l6-2.5 3 .5" fill="none" stroke="#e8e8e8" stroke-width="1.2"/></g><path d="M1113 289h8l-4 3.6z" fill="#9a9a9a"/><g transform="translate(1100.2 297.8)"><path d="M0 1.5l2-1.5 5 2 4.5 3.5 6 3 1.5 2.5-1.5 2-5.5-.500-4-3-4.5-1.5z" fill="#e8e8e8" stroke="#2a2a2a" stroke-width=".6"/><path d="M2.5 3l3.5 1 2 2.5-1.5 1-3-1zM9.5 7l4 1.5 3 2.5-1 1.2-4-.700z" fill="#222"/><path d="M2 0l6-2.5 3 .5" fill="none" stroke="#e8e8e8" stroke-width="1.2"/></g><rect x="1095.8" y="306.3" width="11" height="10" rx="2" fill="#9c9c9c" stroke="#d9d9d9" stroke-width=".9"/><path d="M1099.3 308.3l5 3-5 3z" fill="#f4f4f4"/><path d="M1116.5 312v8l4-4z" fill="#9a9a9a"/><path d="M1093 322.5h28" stroke="#333"/><circle cx="1105.5" cy="342.5" r="3.6" fill="#e4e4e4"/><path d="M1103 377l9-8.5" stroke="#e9e9e9" stroke-width="2.4" stroke-linecap="round"/><circle cx="1103.5" cy="376" r="3.6" fill="#bdbdbd" stroke="#eee" stroke-width=".8"/><path d="M1100.5 408.5l7.5-10" stroke="#8a8a8a" stroke-width="2"/><circle cx="1109.5" cy="398" r="3.3" fill="#ececec"/><circle cx="1101.8" cy="437.8" r="3.6" fill="#e4e4e4"/><path d="M1098 464.5l9.5-6.5 8 7.5-9 5.5z" fill="#cfcfcf"/><path d="M1106.5 465l5-9.5" stroke="#f2f2f2" stroke-width="2.2" stroke-linecap="round"/><path d="M1098 494.5l9.5-6.5 8 7.5-9 5.5z" fill="#cfcfcf"/><path d="M1098.5 532v-17.5h17.5" fill="none" stroke="#dadada" stroke-width="1.6"/><path d="M1098.5 532c1-9 8-16 17.5-17.5" fill="none" stroke="#dadada" stroke-width="1.6"/><rect x="1096.8" y="512.8" width="3.4" height="3.4" fill="#eee"/><rect x="1114.3" y="512.8" width="3.4" height="3.4" fill="#eee"/><rect x="1096.8" y="530.3" width="3.4" height="3.4" fill="#eee"/><path d="M1098 558.5l10-11 2 9.5z" fill="#dcdcdc"/><path d="M1108 547.5l7 10-5-.5z" fill="#3f6fc0"/><rect x="1098" y="575" width="16" height="16" rx="1.5" fill="#d8d8d8"/><path d="M1100 577h4v4h-4zM1108 577h4v4h-4zM1104 581h4v4h-4zM1100 585h4v4h-4zM1108 585h4v4h-4z" fill="#e08a8a"/><path d="M1104 577h4v4h-4zM1100 581h4v4h-4zM1108 581h4v4h-4zM1104 585h4v4h-4z" fill="#8ab4e0"/><path d="M1116.5 588v8l4-4z" fill="#9a9a9a"/><path d="M1106 604.5l9 8.5-9 8.5-9-8.5z" fill="#c9c9c9" stroke="#4a78d8" stroke-width="1.6"/><path d="M1099 636h4l3 1.5 3-1.5h4v4l-1 3 1 3v4h-4l-3-1.5-3 1.5h-4v-4l1-3-1-3z" fill="#bdbdbd"/><path d="M1105.5 674l6.5-9M1105.5 674l-8-1M1105.5 674l5 9" stroke="#e6e6e6" stroke-width="2" stroke-linecap="round"/><circle cx="1105.5" cy="674" r="3.2" fill="#f0f0f0"/><circle cx="1106.5" cy="703.5" r="9.6" fill="none" stroke="#8a8a8a" stroke-width="1" stroke-dasharray="1.5 1.5"/><rect x="1101" y="698" width="11" height="11" rx="1.5" fill="#d2d2d2"/><path d="M1102 701.5h9M1102 705h9" stroke="#777" stroke-width="1"/><rect x="1097" y="725" width="19" height="17.5" fill="#1e1e1e" stroke="#e4e4e4" stroke-width="1.3"/><path d="M1098 741l5-8 4 4 4-6 4.5 10z" fill="#d8d8d8"/><path d="M1100 729.5h6l2 2h-8z" fill="#bbb"/><path d="M1116.5 738v8l4-4z" fill="#333"/><path d="M1093 755.5h28" stroke="#333"/><path d="M1106.5 767.5a6.6 6.6 0 0 1 6.6 6.6c0 5-5 8-6.6 14.5c-1.6-6.5-6.6-9.5-6.6-14.5a6.6 6.6 0 0 1 6.6-6.6z" fill="#e2e2e2" stroke="#888" stroke-width=".8"/><circle cx="1106.5" cy="774" r="2.8" fill="#9a9a9a"/><path d="M1116.5 782v8l4-4z" fill="#333"/><rect x="1124" y="0" width="5" height="935" fill="url(#sdots)"/><path d="M1125 478.5l2.5-1.8v3.6z" fill="#9a9a9a"/><rect x="1131" y="2" width="10.5" height="27" fill="#4c4c4c"/><rect x="1131" y="2" width="10.5" height="27" fill="url(#hdots)"/><path d="M1141.8 2v27" stroke="#1d1d1d" stroke-dasharray="2 1"/><path d="M1133 8.5h6.8l-3.4-6z" fill="#161616"/><g transform="translate(40.4 53.4) scale(1)"><path d="M1 10.3l7.8 5.2 2.7-6.3 2.8 1.6 3 3.6.2 3.3-3.4 1 .500 5.8-2.4 2.7-2.8-2.6-.600-5-3.8 3.2-3-1.8.5-3.5 2.4-1.5z" fill="#0d0d0d"/><path d="M1 10.3l3.5-3 5-2.5" fill="none" stroke="#5a4a4a" stroke-width=".7" stroke-dasharray="1.2 1.5"/><path d="M1.2 17l2.8-1 0 5-2.4-.500z" fill="#4a4a4a"/><path d="M12.8 2l2 3.4 4.4 1.5 2-4.4 3.4-1.5 2 2.4 1.4 4.5 2 1.9-2 2.5-.400 5.9-4.5 2-3.9-1-2-4.9-2.9-2-1-5.4z" fill="#d8872c"/><path d="M26.6 3.4l1.4 4.5 2 1.9-2 2.5-.400 5.9-3 1.2 1-6-1.2-5z" fill="#8e4a1c"/><path d="M14.8 6l5 2 2 3-1 3-4-1.5z" fill="#f2d233"/><path d="M17.2 10.3l3.6-.600 1.6 3.5-.300 5-2.9 1-1.4-3.5z" fill="#f3f0f4"/><path d="M20.7 3.2l2.6-.600.6 3.6-1.7 1.6-1.7-1.2z" fill="#fbf6ee"/><path d="M21.5 4.2l.800 2.6" stroke="#5a1a10" stroke-width=".9"/></g><circle cx="931.9" cy="55.9" r="10.7" fill="#4c2c2a" stroke="#aeaaaa" stroke-width="1.3"/><path d="M928.4 54.5v-2.6a3.3 3.3 0 0 1 6.6 0v2.6" fill="none" stroke="#efefef" stroke-width="1.8"/><rect x="926.8" y="54.3" width="9.8" height="7" fill="#ececec"/><path d="M929.8 55.3l3.8 3.8-1.8.1.9 2-1 .500-.900-2-1 1z" fill="#4a2a26"/><rect x="947.6" y="44.8" width="60.6" height="22.4" rx="11.2" fill="#4c2c2a" stroke="#aeaaaa" stroke-width="1.3"/><path d="M992.8 56.3h7l-3.5 3.4z" fill="#f2f2f2"/><rect x="1015.7" y="44.8" width="69.4" height="22.4" rx="11.2" fill="#9a4a2c"/><rect x="1015.7" y="44.8" width="69.4" height="22.4" rx="11.2" fill="url(#cdots)"/><rect x="1015.7" y="44.8" width="69.4" height="22.4" rx="11.2" fill="none" stroke="#e2b3a2" stroke-width="1.3"/><path d="M1061.5 56.5v-1.8a2.5 2.5 0 0 1 5 0v1.8" fill="none" stroke="#e4e4e4" stroke-width="1.3"/><rect x="1060.3" y="56.3" width="7.4" height="5" fill="#e0e0e0"/><path d="M1069.8 56.3h7l-3.5 3.4z" fill="#fff"/><path d="M2171.5 15.5l-9 9" stroke="#1e1e1e" stroke-width="2" stroke-linecap="round"/><path d="M2181 6.3l-9.5 9.2" stroke="#e2e2e2" stroke-width="2.6" stroke-linecap="round"/><path d="M2167 11.5l12.3 11.8" stroke="#d2d2d2" stroke-width="4" stroke-linecap="round"/><path d="M2162.8 11.5a3.8 3.8 0 1 0 3.7-4.3" fill="none" stroke="#d2d2d2" stroke-width="2.4"/><circle cx="2179.3" cy="23.2" r="1.1" fill="#8a8a8a"/><rect x="2194" y="6" width="4" height="4" fill="#e4e4e4"/><path d="M2196 10v13M2196 14.5h5M2196 19h5M2196 23h5" stroke="#cfcfcf" stroke-width="1.2" fill="none"/><rect x="2201" y="12.5" width="5.5" height="3.6" fill="#e4e4e4"/><rect x="2201" y="17.2" width="5.5" height="3.6" fill="#e4e4e4"/><rect x="2201" y="21.7" width="5.5" height="3.3" fill="#e4e4e4"/><rect x="2220.8" y="6.3" width="17.4" height="18.4" rx="1.5" fill="#d6d6d6" stroke="#1e1e1e" stroke-width=".8"/><path d="M2221 11h17M2221 15.5h17M2221 20h17" stroke="#a9a9a9" stroke-width="1" stroke-dasharray="1.5 1"/><rect x="2268.5" y="5.5" width="18" height="18.6" rx="1.5" fill="#e2e2e2" stroke="#1e1e1e" stroke-width=".8"/><rect x="2270.5" y="7.5" width="3.9" height="3.9" fill="#b5482a"/><rect x="2275.5" y="7.5" width="3.9" height="3.9" fill="#e0a040"/><rect x="2280.5" y="7.5" width="3.9" height="3.9" fill="#e8d040"/><rect x="2270.5" y="12.5" width="3.9" height="3.9" fill="#505a68"/><rect x="2275.5" y="12.5" width="3.9" height="3.9" fill="#4a70c8"/><rect x="2280.5" y="12.5" width="3.9" height="3.9" fill="#4a90d8"/><rect x="2270.5" y="17.5" width="3.9" height="3.9" fill="#181818"/><rect x="2275.5" y="17.5" width="3.9" height="3.9" fill="#787878"/><rect x="2280.5" y="17.5" width="3.9" height="3.9" fill="#d8d8d8"/><rect x="2299" y="6.5" width="17" height="17.5" rx="1.5" fill="#3a3a3a" stroke="#a4a4a4" stroke-width="1" stroke-dasharray="2 1.5"/><path d="M2302 11h4M2309.5 11h4M2302 15.5h4M2309.5 15.5h4M2302 20h4M2309.5 20h4" stroke="#e4e4e4" stroke-width="1.8"/><g transform="translate(1655 33.5) scale(0.62)"><path d="M1 10.3l7.8 5.2 2.7-6.3 2.8 1.6 3 3.6.2 3.3-3.4 1 .500 5.8-2.4 2.7-2.8-2.6-.600-5-3.8 3.2-3-1.8.5-3.5 2.4-1.5z" fill="#0d0d0d"/><path d="M1 10.3l3.5-3 5-2.5" fill="none" stroke="#5a4a4a" stroke-width=".7" stroke-dasharray="1.2 1.5"/><path d="M1.2 17l2.8-1 0 5-2.4-.500z" fill="#4a4a4a"/><path d="M12.8 2l2 3.4 4.4 1.5 2-4.4 3.4-1.5 2 2.4 1.4 4.5 2 1.9-2 2.5-.400 5.9-4.5 2-3.9-1-2-4.9-2.9-2-1-5.4z" fill="#d8872c"/><path d="M26.6 3.4l1.4 4.5 2 1.9-2 2.5-.400 5.9-3 1.2 1-6-1.2-5z" fill="#8e4a1c"/><path d="M14.8 6l5 2 2 3-1 3-4-1.5z" fill="#f2d233"/><path d="M17.2 10.3l3.6-.600 1.6 3.5-.300 5-2.9 1-1.4-3.5z" fill="#f3f0f4"/><path d="M20.7 3.2l2.6-.600.6 3.6-1.7 1.6-1.7-1.2z" fill="#fbf6ee"/><path d="M21.5 4.2l.800 2.6" stroke="#5a1a10" stroke-width=".9"/></g><path d="M1669.8 57.3h7l-3.5 3.2z" fill="#a8a8a8"/><path d="M1835.3 139.2l3-1.6 2.3 4.2 6-10.3 1.3.6-6.3 13.2-2.3.1z" fill="#efefef"/></svg>
<span class="t" style="left:1102.6px;top:10.28px;font:bold 14.5px/normal 'Liberation Sans',sans-serif;color:#f4f4f4;transform:scaleX(0.9032);">?</span>
<span class="t" style="left:957px;top:46.93px;font:14px/normal 'Liberation Sans',sans-serif;color:#f4f4f4;transform:scaleX(0.9023);">Persp</span>
<span class="t" style="left:1025px;top:46.93px;font:14px/normal 'Liberation Sans',sans-serif;color:#fff;transform:scaleX(0.9347);">cam1</span>
<span class="t" style="left:1102px;top:423.63px;font:bold 13px/normal 'Liberation Sans',sans-serif;color:#f4f4f4;transform:scaleX(0.9682);text-shadow:0 0 2px #222;">12</span>
<span class="t" style="left:1102px;top:482.74px;font:bold 13px/normal 'Liberation Sans',sans-serif;color:#f4f4f4;transform:scaleX(0.9682);text-shadow:0 0 2px #222;">12</span>
<svg width="2343" height="935" viewBox="0 0 2343 935" style="left:0;top:0"><defs><pattern id="dots" width="4" height="4" patternUnits="userSpaceOnUse"><rect x="0" y="0" width="1" height="1" fill="#efe6de" opacity=".9"/><rect x="2" y="2" width="1" height="1" fill="#efe6de" opacity=".9"/></pattern><pattern id="dots2" width="2" height="2" patternUnits="userSpaceOnUse"><rect x="0" y="0" width="1" height="1" fill="#000" opacity=".10"/></pattern></defs><circle cx="1313.2" cy="333.8" r="46.6" fill="none" stroke="#6d646b" stroke-width="7"/><circle cx="1313" cy="443.8" r="50.6" fill="#4a6b9b"/><circle cx="1313" cy="443.8" r="35" fill="#9677c9"/><path d="M1313.2 360V398" stroke="#5e84b6" stroke-width="1.6"/><path d="M1313.2 398V414" stroke="#7fa2d0" stroke-width="1.4" stroke-dasharray="1.5 1.5"/><rect x="1261.8" y="318.4" width="102.8" height="31.2" rx="3.5" fill="#7cc7e9"/><path d="M1338.5 318.6l14.3 0l-3 31l-14.5 0z" fill="#b792c6"/><rect x="1261.8" y="318.4" width="102.8" height="31.2" rx="3.5" fill="url(#dots)"/><path d="M1277.5 318.5l-2.6 31M1292 318.5l-2.6 31M1338.3 318.5l-3 31M1353 318.5l-3 31" stroke="#5aa0c0" stroke-width="1" fill="none"/><rect x="1261.8" y="318.4" width="102.8" height="31.2" rx="3.5" fill="none" stroke="#5c9cbd" stroke-width="1"/><path d="M1305 328l4.5-1.5 1.3-5.3 3.2 5.3 4.5.500 4-1 1.5 2-2.5 2.5 2.5 5.5-1 4-5 4.5-6 1.5-5-1.5-2.5-5.5-1.5-2.5 2-2z" fill="#7a3b29"/><path d="M1309 331l4-1 4 3-1 6-5 2-3-4z" fill="#5e2a1e"/><circle cx="1317.5" cy="329.3" r=".9" fill="#1c0c08"/><circle cx="1313.2" cy="358" r="4.8" fill="#b9b9b9" stroke="#2a2a2a" stroke-width=".8"/><circle cx="1313.2" cy="420" r="4.8" fill="#b3b0b6"/><circle cx="1313.2" cy="468" r="4.8" fill="#b3b0b6"/><rect x="1260.3" y="426.6" width="105.6" height="34.4" rx="4.5" fill="#e2a9ad"/><rect x="1262" y="428.3" width="102.2" height="31" rx="3.5" fill="#1c1c1c"/><rect x="1263.2" y="429.5" width="99.8" height="28.6" rx="2.8" fill="#d6d6d6"/><path d="M1351.8 429.5h8.4a2.8 2.8 0 0 1 2.8 2.8v23a2.8 2.8 0 0 1-2.8 2.8h-11.4z" fill="#6ec3ea"/><rect x="1263.2" y="429.5" width="99.8" height="28.6" rx="2.8" fill="url(#dots2)"/><path d="M1277.5 429.5l-2.6 28.6M1292 429.5l-2.6 28.6M1339.5 429.5l-2.6 28.6M1352 429.5l-3 28.6" stroke="#555" stroke-width="1" fill="none"/><g transform="translate(1301 433.5) scale(0.72)"><path d="M1 10.3l7.8 5.2 2.7-6.3 2.8 1.6 3 3.6.200 3.3-3.4 1 .500 5.8-2.4 2.7-2.8-2.6-.600-5-3.8 3.2-3-1.8.500-3.5 2.4-1.5z" fill="#0d0d0d"/><path d="M1 10.3l3.5-3 5-2.5" fill="none" stroke="#5a4a4a" stroke-width=".7" stroke-dasharray="1.2 1.5"/><path d="M1.2 17l2.8-1 0 5-2.4-.500z" fill="#4a4a4a"/><path d="M12.8 2l2 3.4 4.4 1.5 2-4.4 3.4-1.5 2 2.4 1.4 4.5 2 1.9-2 2.5-.400 5.9-4.5 2-3.9-1-2-4.9-2.9-2-1-5.4z" fill="#d8872c"/><path d="M26.6 3.4l1.4 4.5 2 1.9-2 2.5-.400 5.9-3 1.2 1-6-1.2-5z" fill="#8e4a1c"/><path d="M14.8 6l5 2 2 3-1 3-4-1.5z" fill="#f2d233"/><path d="M17.2 10.3l3.6-.600 1.6 3.5-.300 5-2.9 1-1.4-3.5z" fill="#f3f0f4"/><path d="M20.7 3.2l2.6-.600.6 3.6-1.7 1.6-1.7-1.2z" fill="#fbf6ee"/><path d="M21.5 4.2l.800 2.6" stroke="#5a1a10" stroke-width=".9"/></g><path d="M1381.6 356.5v-2.6a3.6 3.6 0 0 1 7.2 0v2.6" fill="none" stroke="#665f6b" stroke-width="1.8"/><rect x="1379" y="356.3" width="12.6" height="8.4" rx="1" fill="#665f6b"/></svg>
<span class="t" style="left:1374.4px;top:320.3px;font:21px/normal 'Liberation Sans',sans-serif;color:#cfcfcf;transform:scaleX(1.0265);">testgeometry_pighead1</span>
<span class="t" style="left:1374.4px;top:430.69px;font:21px/normal 'Liberation Sans',sans-serif;color:#cfcfcf;transform:scaleX(1.0345);">extractcontours1</span>
</body></html>
